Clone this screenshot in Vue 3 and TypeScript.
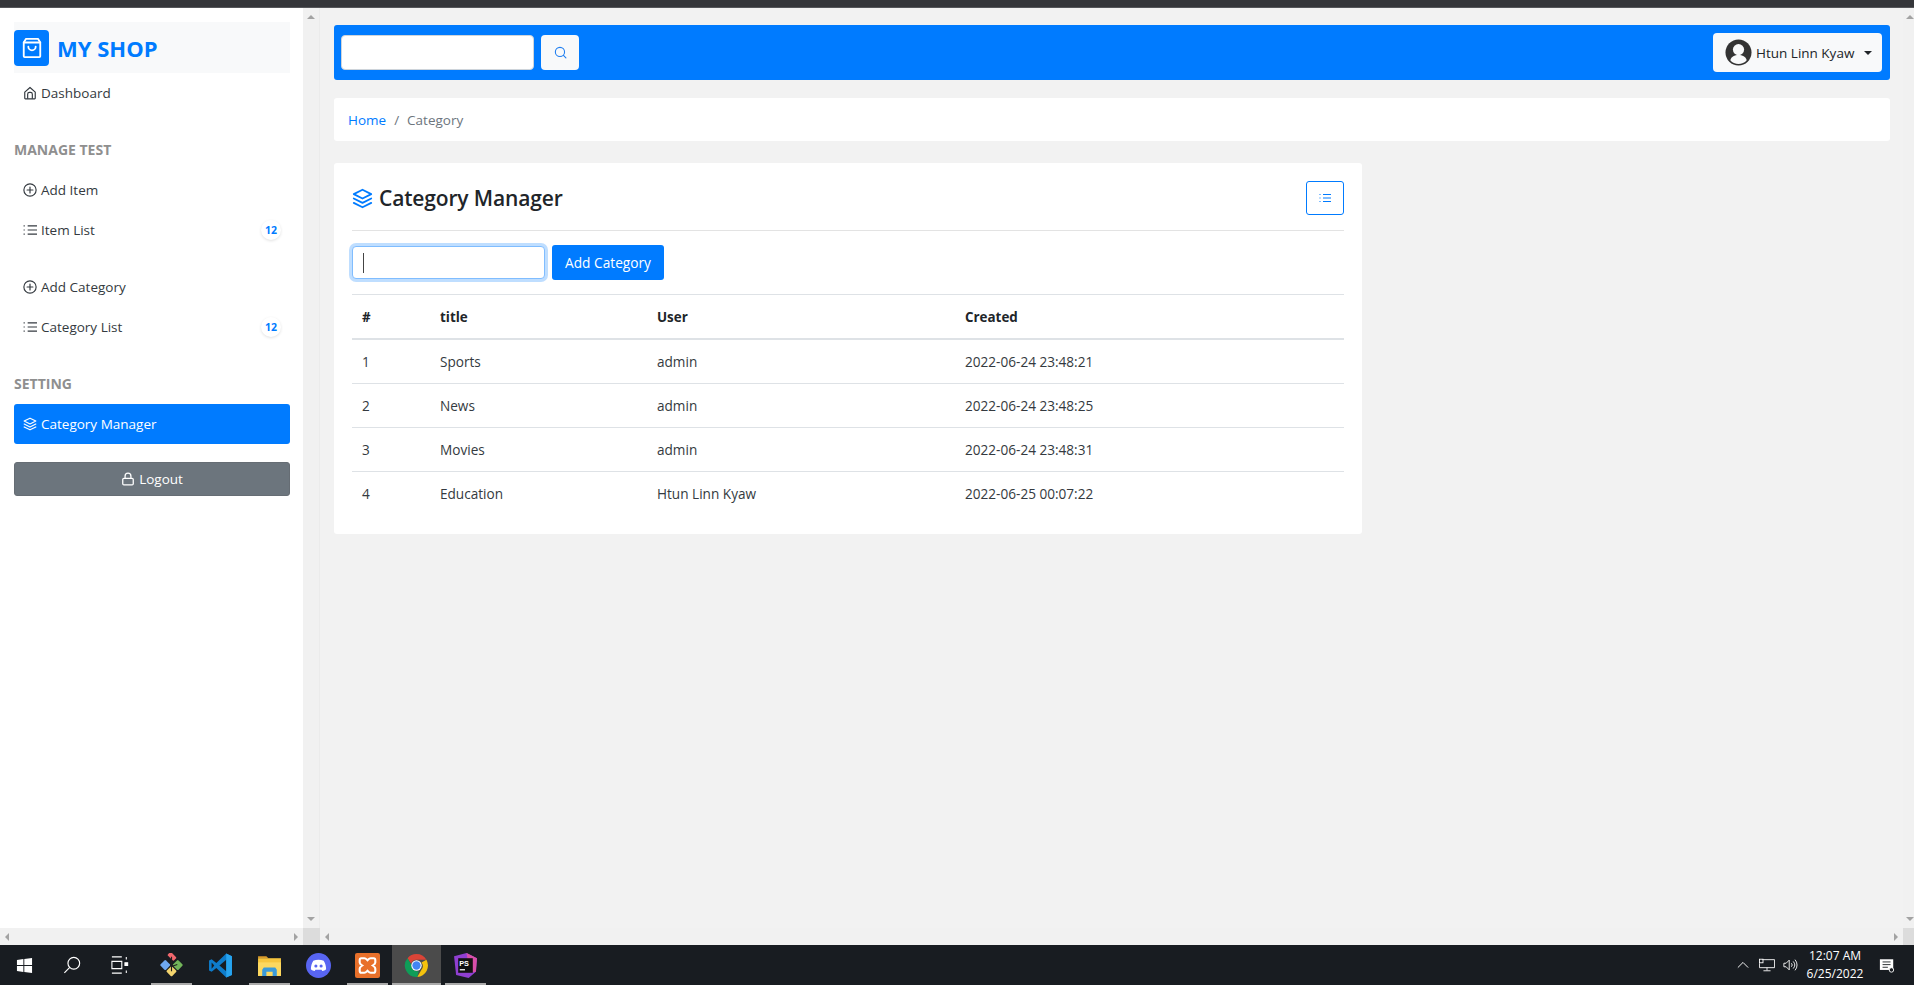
<script setup lang="ts">
interface NavItem {
  label: string
  icon: string
  badge?: number
  spaced?: boolean
}

const testItems: NavItem[] = [
  { label: 'Add Item', icon: 'plus' },
  { label: 'Item List', icon: 'list', badge: 12 },
  { label: 'Add Category', icon: 'plus', spaced: true },
  { label: 'Category List', icon: 'list', badge: 12 },
]

const rows = [
  { id: 1, title: 'Sports', user: 'admin', created: '2022-06-24 23:48:21' },
  { id: 2, title: 'News', user: 'admin', created: '2022-06-24 23:48:25' },
  { id: 3, title: 'Movies', user: 'admin', created: '2022-06-24 23:48:31' },
  { id: 4, title: 'Education', user: 'Htun Linn Kyaw', created: '2022-06-25 00:07:22' },
]
</script>

<template>
  <svg class="sprite" aria-hidden="true">
    <symbol id="i-home" viewBox="0 0 24 24" fill="none" stroke="currentColor" stroke-width="2" stroke-linejoin="round">
      <path d="M3 10.5 12 2.5l9 8V21a1 1 0 0 1-1 1H4a1 1 0 0 1-1-1z" />
      <path d="M8 22v-8a3 3 0 0 1 3-3h2a3 3 0 0 1 3 3v8" />
    </symbol>
    <symbol id="i-plus" viewBox="0 0 24 24" fill="none" stroke="currentColor" stroke-width="2" stroke-linecap="round">
      <circle cx="12" cy="12" r="10.5" />
      <path d="M12 7v10M7 12h10" />
    </symbol>
    <symbol id="i-list" viewBox="0 0 24 24" fill="none" stroke="currentColor" stroke-width="2">
      <path d="M8 5h16M8 12h16M8 19h16" />
      <path d="M1 5h3M1 12h3M1 19h3" stroke-dasharray="2 1" />
    </symbol>
    <symbol id="i-layers" viewBox="0 0 24 24" fill="none" stroke="currentColor" stroke-width="2" stroke-linejoin="round" stroke-linecap="round">
      <path d="M12 2 2 7l10 5 10-5z" />
      <path d="m2 17 10 5 10-5" />
      <path d="m2 12 10 5 10-5" />
    </symbol>
    <symbol id="i-lock" viewBox="0 0 24 24" fill="none" stroke="currentColor" stroke-width="2.2" stroke-linejoin="round">
      <rect x="3" y="11" width="18" height="11" rx="2" />
      <path d="M7 11V7a5 5 0 0 1 10 0v4" />
    </symbol>
    <symbol id="i-search" viewBox="0 0 24 24" fill="none" stroke="currentColor" stroke-width="2" stroke-linecap="round">
      <circle cx="11" cy="11" r="8.5" />
      <path d="m17.5 17.5 4.5 4.5" />
    </symbol>
  </svg>

  <div class="screen">
    <div class="browser-strip"></div>

    <div class="workspace">
      <section class="side-pane">
        <div class="pane-body">
          <aside class="sidebar">
            <div class="brand">
              <span class="brand-icon">
                <svg viewBox="0 0 24 24" fill="none" stroke="currentColor" stroke-width="2" stroke-linejoin="round" stroke-linecap="round">
                  <path d="M5.5 2h13L21 6v15a1 1 0 0 1-1 1H4a1 1 0 0 1-1-1V6z" />
                  <path d="M3 6h18" />
                  <path d="M8 10.5a4 4 0 0 0 8 0" />
                </svg>
              </span>
              <span class="brand-name">MY SHOP</span>
            </div>

            <a class="nav-link">
              <svg class="nav-icon"><use href="#i-home" /></svg>
              Dashboard
            </a>

            <h6 class="nav-title first">MANAGE TEST</h6>
            <a v-for="item in testItems" :key="item.label" class="nav-link" :class="{ spaced: item.spaced }">
              <svg class="nav-icon"><use :href="`#i-${item.icon}`" /></svg>
              {{ item.label }}
              <span v-if="item.badge" class="badge">{{ item.badge }}</span>
            </a>

            <h6 class="nav-title">SETTING</h6>
            <a class="nav-link active">
              <svg class="nav-icon"><use href="#i-layers" /></svg>
              Category Manager
            </a>

            <button type="button" class="logout">
              <svg class="nav-icon"><use href="#i-lock" /></svg>
              Logout
            </button>
          </aside>
          <div class="vbar side-vbar">
            <i class="arrow up"></i>
            <i class="arrow down"></i>
          </div>
        </div>
        <div class="hbar">
          <div class="hbar-track">
            <i class="arrow left"></i>
            <i class="arrow right"></i>
          </div>
          <div class="corner side-corner"></div>
        </div>
      </section>

      <section class="main-pane">
        <div class="pane-body">
          <main class="content">
            <nav class="topbar">
              <input class="search-input" type="text" />
              <button type="button" class="search-btn">
                <svg class="search-icon"><use href="#i-search" /></svg>
              </button>
              <button type="button" class="user-btn">
                <svg class="avatar" viewBox="0 0 28 28">
                  <circle cx="14" cy="14" r="13.5" fill="#333" />
                  <circle cx="14" cy="11" r="5.8" fill="#f8f9fa" />
                  <path d="M5.5 22c1-4 4.500-5.500 8.500-5.500s7.500 1.500 8.500 5.500a11 11 0 0 1-17 0z" fill="#f8f9fa" />
                </svg>
                <span class="user-name">Htun Linn Kyaw</span>
                <i class="caret-down"></i>
              </button>
            </nav>

            <div class="crumbs">
              <a class="crumb-link">Home</a>
              <span class="crumb-sep">/</span>
              <span>Category</span>
            </div>

            <div class="card">
              <div class="card-head">
                <h4 class="card-title">
                  <svg class="title-icon"><use href="#i-layers" /></svg>
                  Category Manager
                </h4>
                <button type="button" class="toggle-btn">
                  <svg class="toggle-icon"><use href="#i-list" /></svg>
                </button>
              </div>

              <div class="add-form">
                <label class="field">
                  <input class="field-input" type="text" />
                  <span class="text-caret"></span>
                </label>
                <button type="button" class="add-btn">Add Category</button>
              </div>

              <table class="table">
                <colgroup>
                  <col style="width: 78px" />
                  <col style="width: 217px" />
                  <col style="width: 308px" />
                  <col />
                </colgroup>
                <thead>
                  <tr>
                    <th>#</th>
                    <th>title</th>
                    <th>User</th>
                    <th>Created</th>
                  </tr>
                </thead>
                <tbody>
                  <tr v-for="row in rows" :key="row.id">
                    <td>{{ row.id }}</td>
                    <td>{{ row.title }}</td>
                    <td>{{ row.user }}</td>
                    <td>{{ row.created }}</td>
                  </tr>
                </tbody>
              </table>
            </div>
          </main>
          <div class="vbar narrow">
            <i class="arrow up"></i>
            <i class="arrow down"></i>
          </div>
        </div>
        <div class="hbar">
          <div class="hbar-track">
            <i class="arrow left"></i>
            <i class="arrow right"></i>
          </div>
          <div class="corner"></div>
        </div>
      </section>
    </div>

    <footer class="taskbar">
      <div class="task-cell os-cell">
        <svg viewBox="0 0 18 18" class="tb-win">
          <path d="M1 3.200 7.800 2.200V8.500H1zM8.800 2.100 17 1V8.500H8.800zM1 9.500H7.800V15.800L1 14.800zM8.800 9.500H17V17L8.800 15.900z" fill="#fff" />
        </svg>
      </div>
      <div class="task-cell os-cell">
        <svg viewBox="0 0 20 20" class="tb-glyph" fill="none" stroke="#fff" stroke-width="1.300">
          <circle cx="12" cy="8" r="6.500" />
          <path d="M7.500 12.700 1.500 18.700" />
        </svg>
      </div>
      <div class="task-cell os-cell last-os">
        <svg viewBox="0 0 20 20" class="tb-glyph" fill="none" stroke="#fff" stroke-width="1.200">
          <path d="M1 1h11M1 19h11M1 6h11v8H1z" />
          <path d="M17 1v3M17 16v3" />
          <path d="M15.500 7.500h3v3h-3z" fill="#fff" />
        </svg>
      </div>
      <div class="task-cell running">
        <svg viewBox="0 0 26 26" class="tb-app">
          <rect x="2.500" y="8.500" width="8" height="8" rx="1.200" fill="#6ea8f0" transform="rotate(45 6.500 12.500)" />
          <rect x="15.500" y="8.500" width="8" height="8" rx="1.200" fill="#72b55a" transform="rotate(45 19.500 12.500)" />
          <rect x="9" y="15" width="8" height="8" rx="1.200" fill="#f3d46e" transform="rotate(45 13 19)" />
          <rect x="9" y="1" width="9" height="5" rx="1.200" fill="#f0676d" transform="rotate(45 13.500 3.500)" />
          <path d="M13 4v15M13 14l6-2M13 13l-1-4" stroke="#1f1f1f" stroke-width="1.200" fill="none" />
        </svg>
      </div>
      <div class="task-cell">
        <svg viewBox="0 0 24 24" class="tb-app">
          <path d="M17.500 0.500 8 9.500 3.500 6 1 7.300v9.400L3.500 18 8 14.500l9.500 9 5.500-2.500V3z" fill="#0e7ccb" />
          <path d="M17.500 6.500 11 12l6.500 5.500z" fill="#181c21" />
          <path d="M3.500 9 6 12l-2.500 3z" fill="#181c21" />
          <path d="M17.500 0.500 23 3v18l-5.500 2.500z" fill="#27a4ef" />
        </svg>
      </div>
      <div class="task-cell running">
        <svg viewBox="0 0 24 24" class="tb-app">
          <path d="M1 3h8l2 2H1z" fill="#d99a2b" />
          <rect x="1" y="5" width="22" height="17" fill="#f6c63f" />
          <rect x="1" y="9" width="22" height="13" fill="#fcd860" />
          <path d="M5 22v-6l1.500-2h11l1.500 2v6h-4v-4H9v4z" fill="#3a9ad9" />
        </svg>
      </div>
      <div class="task-cell">
        <svg viewBox="0 0 24 24" class="tb-app">
          <circle cx="12" cy="12" r="12" fill="#5865f2" />
          <path d="M7 7.500c3-1.300 7-1.300 10 0 1.500 2.500 2.300 5.200 2.300 8-1 1-2.500 1.500-3.600 1.800l-.8-1.300H9.100l-.8 1.300C7.200 17 5.700 16.500 4.700 15.500c0-2.800.8-5.500 2.300-8z" fill="#fff" />
          <circle cx="9.500" cy="12.500" r="1.500" fill="#5865f2" />
          <circle cx="14.500" cy="12.500" r="1.500" fill="#5865f2" />
        </svg>
      </div>
      <div class="task-cell running">
        <svg viewBox="0 0 24 24" class="tb-app">
          <rect width="24" height="24" rx="2" fill="#e8702a" />
          <path d="M6 5h3c1.500 0 2 1 3 2 1-1 1.500-2 3-2h3c1 0 1.500 1 1.500 2v2c0 1-1 2-2.500 3 1.500 1 2.500 2 2.500 3v2c0 1-.5 2-1.500 2h-3c-1.500 0-2-1-3-2-1 1-1.500 2-3 2H6c-1 0-1.500-1-1.500-2v-2c0-1 1-2 2.500-3C5.500 11 4.500 10 4.500 9V7C4.500 6 5 5 6 5z" fill="none" stroke="#fff" stroke-width="2" />
        </svg>
      </div>
      <div class="task-cell active">
        <svg viewBox="0 0 24 24" class="tb-app">
          <path d="M12 1a11 11 0 0 1 9.530 5.500H12a5.500 5.500 0 0 0-5.200 3.700L3.400 5A11 11 0 0 1 12 1z" fill="#db4437" />
          <path d="M21.530 6.500A11 11 0 0 1 12.700 23l3.900-6.600A5.500 5.500 0 0 0 16.800 9z" fill="#f4c20d" />
          <path d="M12.700 23A11 11 0 0 1 3.400 5l3.900 6.700a5.500 5.500 0 0 0 6.800 5.700z" fill="#0f9d58" />
          <circle cx="12" cy="12" r="5" fill="#fff" />
          <circle cx="12" cy="12" r="4" fill="#4285f4" />
        </svg>
      </div>
      <div class="task-cell running">
        <svg viewBox="0 0 24 24" class="tb-app">
          <path d="M1 3 13 0l10 5-1 13-7 6L3 21z" fill="#8f3fd1" />
          <path d="M13 0l10 5-1 13-6 1z" fill="#d84fa8" />
          <rect x="5" y="5" width="14" height="14" fill="#111" />
          <text x="6" y="12.500" class="ps-text">PS</text>
          <rect x="6.500" y="15.500" width="5" height="1.200" fill="#fff" />
        </svg>
      </div>

      <div class="tray">
        <svg viewBox="0 0 14 8" class="tray-chevron" fill="none" stroke="#fff" stroke-width="1.100">
          <path d="M1 7 7 1l6 6" />
        </svg>
        <svg viewBox="0 0 18 14" class="tray-net" fill="none" stroke="#fff" stroke-width="1">
          <path d="M4 1h13.500v9H.5V5" />
          <path d="M9 10v3M5 13.500h8" />
          <rect x=".5" y=".5" width="4" height="4" />
        </svg>
        <svg viewBox="0 0 18 14" class="tray-sound" fill="none" stroke="#fff" stroke-width="1">
          <path d="M1 5h2.500L7 1.500v11L3.500 9H1z" />
          <path d="M9.500 5a3 3 0 0 1 0 4M11.500 3a6 6 0 0 1 0 8M13.500 1a9 9 0 0 1 0 12" />
        </svg>
        <div class="clock">
          <span>12:07 AM</span>
          <span>6/25/2022</span>
        </div>
        <svg viewBox="0 0 18 16" class="tray-note">
          <path d="M1 1h15v12H1z" fill="#fff" />
          <path d="M4 4h9M4 7h9M4 10h6" stroke="#181c21" stroke-width="1" />
          <circle cx="14" cy="13" r="2.500" fill="#181c21" stroke="#fff" stroke-width="1" />
        </svg>
      </div>
    </footer>
  </div>
</template>

<style scoped>
.sprite {
  position: absolute;
  width: 0;
  height: 0;
}

.screen {
  display: flex;
  flex-direction: column;
  width: 1914px;
  height: 985px;
  overflow: hidden;
  font-family: 'Open Sans', 'Noto Sans', sans-serif;
  font-size: 13.5px;
  color: #212529;
}

.browser-strip {
  flex: none;
  height: 7px;
  background: #35363a;
  border-bottom: 1px solid #55565a;
}

.workspace {
  flex: 1;
  display: flex;
  min-height: 0;
}

.side-pane {
  flex: none;
  width: 320px;
  display: flex;
  flex-direction: column;
  background: #fff;
}

.main-pane {
  flex: 1;
  display: flex;
  flex-direction: column;
  background: #f2f2f2;
}

.pane-body {
  flex: 1;
  display: flex;
  min-height: 0;
}

.vbar {
  flex: none;
  width: 17px;
  display: flex;
  flex-direction: column;
  justify-content: space-between;
  align-items: center;
  padding: 7px 0;
  background: #f1f1f1;
  box-sizing: border-box;
}

.side-vbar {
  border-right: 1px solid #ebebeb;
}

.vbar.narrow {
  width: 11px;
  align-items: flex-start;
  padding-left: 3px;
}

.hbar {
  flex: none;
  height: 17px;
  display: flex;
}

.hbar-track {
  flex: 1;
  display: flex;
  justify-content: space-between;
  align-items: center;
  padding: 0 5px;
  background: #f1f1f1;
}

.corner {
  flex: none;
  width: 11px;
  background: #dcdcdc;
}

.side-corner {
  width: 17px;
}

.arrow {
  display: block;
  width: 0;
  height: 0;
  border-style: solid;
  border-color: transparent;
}

.arrow.up {
  border-width: 0 4px 4px;
  border-bottom-color: #a3a3a3;
}

.arrow.down {
  border-width: 4px 4px 0;
  border-top-color: #a3a3a3;
}

.arrow.left {
  border-width: 4px 4px 4px 0;
  border-right-color: #a3a3a3;
}

.arrow.right {
  border-width: 4px 0 4px 4px;
  border-left-color: #a3a3a3;
}

/* sidebar */
.sidebar {
  flex: 1;
  box-sizing: border-box;
  display: flex;
  flex-direction: column;
  padding: 14px 13px 0 14px;
}

.brand {
  flex: none;
  display: flex;
  align-items: center;
  gap: 8px;
  height: 51px;
  background: #f8f9fa;
}

.brand-icon {
  display: flex;
  align-items: center;
  justify-content: center;
  width: 35px;
  height: 36px;
  border-radius: 4px;
  background: #007bff;
  color: #fff;
}

.brand-icon svg {
  width: 22px;
  height: 22px;
}

.brand-name {
  font-size: 22px;
  font-weight: 700;
  color: #007bff;
}

.nav-link {
  flex: none;
  display: flex;
  align-items: center;
  position: relative;
  height: 40px;
  padding-left: 9px;
  color: #343a40;
}

.nav-link.spaced {
  margin-top: 17px;
}

.nav-icon {
  flex: none;
  width: 14px;
  height: 14px;
  margin-right: 4px;
}

.nav-title {
  margin: 24px 0 7px;
  height: 26px;
  line-height: 26px;
  font-size: 14px;
  font-weight: 700;
  color: #8f8f8f;
}

.nav-title.first {
  margin-top: 24px;
}

.badge {
  position: absolute;
  right: 9px;
  top: 10px;
  width: 20px;
  height: 20px;
  border-radius: 50%;
  background: #fff;
  box-shadow: 0 1px 3px rgba(0, 0, 0, 0.12);
  color: #007bff;
  font-size: 10.5px;
  font-weight: 700;
  line-height: 20px;
  text-align: center;
}

.nav-link.active {
  border-radius: 3px;
  background: #007bff;
  color: #fff;
}

.logout {
  flex: none;
  display: flex;
  align-items: center;
  justify-content: center;
  height: 34px;
  margin-top: 18px;
  border: 1px solid #666d74;
  border-radius: 3px;
  background: #6c757d;
  color: #fff;
  font: inherit;
}

/* main */
.content {
  flex: 1;
  min-width: 0;
  padding: 17px 13px 0 14px;
}

.topbar {
  display: flex;
  align-items: center;
  height: 55px;
  box-sizing: border-box;
  padding: 0 8px 0 7px;
  border-radius: 3px;
  background: #007bff;
}

.search-input {
  box-sizing: border-box;
  width: 193px;
  height: 35px;
  border: 1px solid #ced4da;
  border-radius: 4px;
  background: #fff;
  outline: 0;
}

.search-btn {
  display: flex;
  align-items: center;
  justify-content: center;
  width: 38px;
  height: 35px;
  margin-left: 7px;
  padding: 0;
  border: 0;
  border-radius: 4px;
  background: #f8f9fa;
  color: #1f7ef0;
}

.search-icon {
  width: 13px;
  height: 13px;
}

.user-btn {
  display: flex;
  align-items: center;
  margin-left: auto;
  width: 169px;
  height: 39px;
  box-sizing: border-box;
  padding: 0 0 0 12px;
  border: 0;
  border-radius: 4px;
  background: #f8f9fa;
  color: #212529;
  font: inherit;
}

.avatar {
  width: 27px;
  height: 27px;
  margin-right: 4px;
}

.user-name {
  white-space: nowrap;
}

.caret-down {
  margin-left: 10px;
  width: 0;
  height: 0;
  border-style: solid;
  border-width: 4px 4px 0;
  border-color: #212529 transparent transparent;
}

.crumbs {
  display: flex;
  align-items: center;
  height: 43px;
  margin-top: 18px;
  padding-left: 14px;
  border-radius: 3px;
  background: #fff;
  color: #6c757d;
}

.crumb-link {
  color: #007bff;
}

.crumb-sep {
  margin: 0 8px;
}

.card {
  box-sizing: border-box;
  width: 1028px;
  margin-top: 22px;
  padding: 18px 18px 19px;
  border-radius: 3px;
  background: #fff;
}

.card-head {
  display: flex;
  align-items: center;
  justify-content: space-between;
  padding-bottom: 15px;
  border-bottom: 1px solid #e3e3e3;
}

.card-title {
  display: flex;
  align-items: center;
  margin: 0;
  font-size: 21px;
  font-weight: 600;
  letter-spacing: -0.15px;
  color: #212529;
}

.title-icon {
  width: 21px;
  height: 21px;
  margin-right: 6px;
  color: #007bff;
}

.toggle-btn {
  display: flex;
  align-items: center;
  justify-content: center;
  width: 38px;
  height: 34px;
  padding: 0;
  border: 1px solid #007bff;
  border-radius: 3px;
  background: #fff;
  color: #007bff;
}

.toggle-icon {
  width: 12px;
  height: 12px;
}

.add-form {
  display: flex;
  align-items: center;
  gap: 7px;
  padding: 14px 0;
  border-bottom: 1px solid #dee2e6;
}

.field {
  position: relative;
  display: block;
  height: 33px;
}

.field-input {
  box-sizing: border-box;
  display: block;
  width: 193px;
  height: 33px;
  border: 1px solid #80bdff;
  border-radius: 4px;
  box-shadow: 0 0 0 3px rgba(0, 123, 255, 0.25);
  outline: 0;
}

.text-caret {
  position: absolute;
  left: 11px;
  top: 7px;
  width: 1px;
  height: 20px;
  background: #444;
}

.add-btn {
  width: 112px;
  height: 35px;
  padding: 0;
  border: 0;
  border-radius: 3px;
  background: #007bff;
  color: #fff;
  font: inherit;
  font-size: 13.7px;
}

.table {
  width: 100%;
  border-collapse: collapse;
  table-layout: fixed;
  color: #343a40;
  font-size: 13.6px;
}

.table th {
  height: 43px;
  padding: 0 10px;
  border-bottom: 2px solid #dee2e6;
  font-size: 13.4px;
  font-weight: 700;
  color: #212529;
  text-align: left;
}

.table td {
  height: 43px;
  padding: 0 10px;
  border-bottom: 1px solid #dee2e6;
}

.table tbody tr:last-child td {
  border-bottom: 0;
}

/* windows taskbar */
.taskbar {
  flex: none;
  display: flex;
  align-items: stretch;
  height: 40px;
  background: #181c21;
}

.task-cell {
  position: relative;
  display: flex;
  align-items: center;
  justify-content: center;
  width: 49px;
}

.os-cell {
  width: 48px;
}

.last-os {
  margin-right: 3px;
}

.task-cell.active {
  background: #4b4b4b;
}

.task-cell.running::after,
.task-cell.active::after {
  content: '';
  position: absolute;
  left: 4px;
  right: 4px;
  bottom: 0;
  height: 2px;
  background: #aaa;
}

.task-cell.active::after {
  left: 0;
  right: 0;
}

.tb-win {
  width: 17px;
  height: 17px;
}

.tb-glyph {
  width: 18px;
  height: 18px;
}

.tb-app {
  width: 25px;
  height: 25px;
}

.ps-text {
  font-family: 'Liberation Sans', sans-serif;
  font-size: 7px;
  font-weight: 700;
  fill: #fff;
}

.tray {
  display: flex;
  align-items: center;
  margin-left: auto;
  color: #fff;
}

.tray-chevron {
  width: 12px;
  height: 8px;
  margin-right: 10px;
}

.tray-net {
  width: 16px;
  height: 14px;
  margin-right: 8px;
}

.tray-sound {
  width: 16px;
  height: 14px;
  margin-right: 2px;
}

.clock {
  display: flex;
  flex-direction: column;
  align-items: center;
  width: 68px;
  font-size: 12px;
  line-height: 18px;
}

.tray-note {
  width: 16px;
  height: 15px;
  margin: 0 19px 0 10px;
}
</style>

<style>
html,
body {
  margin: 0;
  overflow: hidden;
}
</style>
